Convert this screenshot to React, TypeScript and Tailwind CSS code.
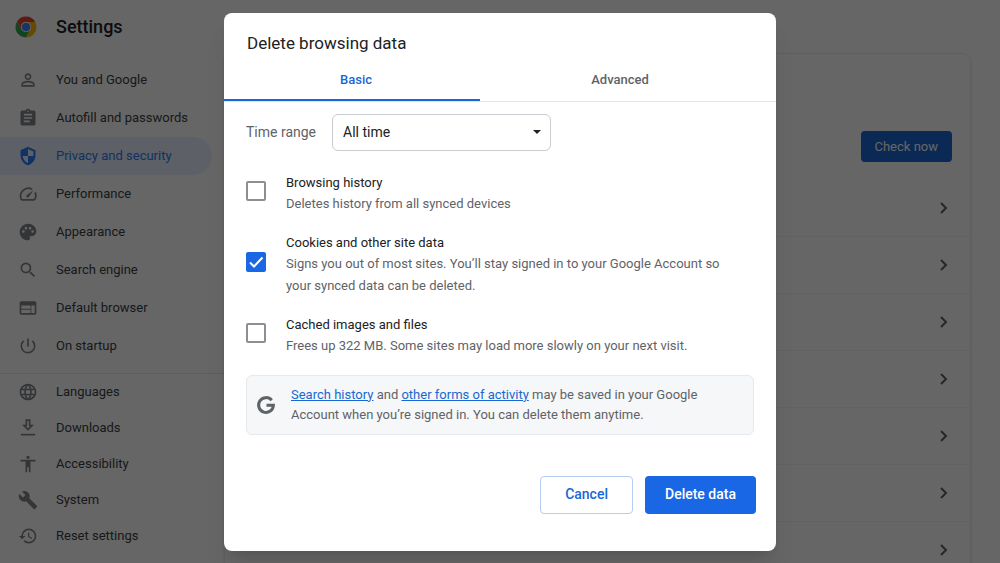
import { useState } from "react";
import type { ReactNode } from "react";
import {
  MdAccessibility,
  MdAssignment,
  MdBuild,
  MdHistory,
  MdLanguage,
  MdPalette,
  MdPersonOutline,
  MdPowerSettingsNew,
  MdSearch,
  MdWeb,
} from "react-icons/md";

interface NavItem {
  label: string;
  icon: ReactNode;
  active?: boolean;
}

function ShieldIcon() {
  return (
    <svg viewBox="0 0 24 24" className="size-5" fill="currentColor">
      <path d="M12 1 3 5v6c0 5.55 3.84 10.74 9 12 5.16-1.26 9-6.45 9-12V5zm0 2.7 6.5 2.9V12H12v8.4c-3.5-1.1-6-4.5-6.5-8.4H12z" />
    </svg>
  );
}

function SpeedIcon() {
  return (
    <svg viewBox="0 0 24 24" className="size-5" fill="none" stroke="currentColor" strokeWidth="2">
      <path d="M17 6.3A9.5 9.5 0 0 0 3.9 18.5a1 1 0 0 0 .8.5h14.6a1 1 0 0 0 .8-.5 9.5 9.5 0 0 0 .6-8.5" />
      <path d="M18.5 7.5 11 13a1.7 1.7 0 1 0 2.2 2.2z" fill="currentColor" stroke="none" />
    </svg>
  );
}

function DownloadIcon() {
  return (
    <svg viewBox="0 0 24 24" className="size-5" fill="none" stroke="currentColor" strokeWidth="2">
      <path d="M10 2.5h4v6.5h2.8L12 14 7.2 9H10z" />
      <path d="M3.5 20h17" />
    </svg>
  );
}

function ChromeLogo() {
  return (
    <svg viewBox="0 0 48 48" className="size-[22px]">
      <circle cx="24" cy="24" r="23" fill="#fff" />
      <path d="M24 13h20.1A23 23 0 0 0 4.1 12.5L14.4 29.5A11 11 0 0 1 24 13z" fill="#ea4335" />
      <path d="M33.5 29.5 23.5 47A23 23 0 0 0 44.1 13H24a11 11 0 0 1 9.5 16.5z" fill="#fbbc04" />
      <path d="M14.5 29.5 4.1 12.5A23 23 0 0 0 23.5 47l10-17.5a11 11 0 0 1-19 0z" fill="#34a853" />
      <circle cx="24" cy="24" r="11" fill="#fff" />
      <circle cx="24" cy="24" r="9.5" fill="#4285f4" />
    </svg>
  );
}

function GoogleIcon() {
  return (
    <svg viewBox="0 0 20 20" className="size-5 shrink-0" fill="none" stroke="#5f6368" strokeWidth="3">
      <path d="M15.7 5.3A7.4 7.4 0 1 0 17.4 10.2H10.5" />
    </svg>
  );
}

const mainItems: NavItem[] = [
  { label: "You and Google", icon: <MdPersonOutline size={20} /> },
  { label: "Autofill and passwords", icon: <MdAssignment size={20} /> },
  { label: "Privacy and security", icon: <ShieldIcon />, active: true },
  { label: "Performance", icon: <SpeedIcon /> },
  { label: "Appearance", icon: <MdPalette size={20} /> },
  { label: "Search engine", icon: <MdSearch size={20} /> },
  { label: "Default browser", icon: <MdWeb size={20} /> },
  { label: "On startup", icon: <MdPowerSettingsNew size={20} /> },
];

const moreItems: NavItem[] = [
  { label: "Languages", icon: <MdLanguage size={20} /> },
  { label: "Downloads", icon: <DownloadIcon /> },
  { label: "Accessibility", icon: <MdAccessibility size={20} /> },
  { label: "System", icon: <MdBuild size={20} /> },
  { label: "Reset settings", icon: <MdHistory size={20} /> },
];

const dataOptions = [
  {
    id: "history",
    title: "Browsing history",
    text: "Deletes history from all synced devices",
    checked: false,
  },
  {
    id: "cookies",
    title: "Cookies and other site data",
    text: "Signs you out of most sites. You’ll stay signed in to your Google Account so your synced data can be deleted.",
    checked: true,
  },
  {
    id: "cache",
    title: "Cached images and files",
    text: "Frees up 322 MB. Some sites may load more slowly on your next visit.",
    checked: false,
  },
];

function Chevron() {
  return (
    <svg viewBox="0 0 8 12" className="h-3 w-2" fill="none" stroke="#5f6368" strokeWidth="2">
      <path d="m1 1 5 5-5 5" />
    </svg>
  );
}

function NavLink({ item, height }: { item: NavItem; height: string }) {
  return (
    <a
      href="#"
      className={`flex items-center gap-[18px] rounded-r-full pl-[18px] ${height} ${
        item.active ? "bg-[#e8f0fe] text-[#2b7df5]" : "text-[#3c4043]"
      }`}
    >
      <span className={item.active ? "" : "text-[#80868b]"}>{item.icon}</span>
      {item.label}
    </a>
  );
}

function Sidebar() {
  return (
    <aside className="w-56 shrink-0">
      <header className="flex h-[54px] items-center gap-[19px] pl-[15px]">
        <ChromeLogo />
        <h1 className="text-lg font-medium text-[#202124]">Settings</h1>
      </header>
      <nav className="pt-[7px] text-[13px]">
        <ul className="mr-3">
          {mainItems.map((item) => (
            <li key={item.label}>
              <NavLink item={item} height="h-[38px]" />
            </li>
          ))}
        </ul>
        <ul className="mt-2 border-t border-[#e8eaed]">
          {moreItems.map((item) => (
            <li key={item.label}>
              <NavLink item={item} height="h-9" />
            </li>
          ))}
        </ul>
      </nav>
    </aside>
  );
}

function SettingsPage() {
  return (
    <div className="flex h-screen overflow-hidden bg-white">
      <Sidebar />
      <main className="flex-1 pt-[53px] pr-[29px]">
        <div className="rounded-t-lg border border-[#eceef0] shadow-sm">
          <div className="flex h-[126px] items-end justify-end px-[18px] pb-[18px]">
            <button type="button" className="h-[31px] rounded bg-[#1967d2] px-[14px] text-[13px] text-white">
              Check now
            </button>
          </div>
          {[0, 1, 2, 3, 4, 5, 6].map((row) => (
            <div key={row} className="flex h-[57px] items-center justify-end border-b border-[#f4f5f6] px-[22px]">
              <Chevron />
            </div>
          ))}
        </div>
      </main>
    </div>
  );
}

function DataCheckbox({ option }: { option: (typeof dataOptions)[number] }) {
  const [checked, setChecked] = useState(option.checked);

  return (
    <label htmlFor={option.id} className="flex items-center gap-5">
      <span className="relative mb-[6px] size-5 shrink-0">
        <input
          id={option.id}
          type="checkbox"
          checked={checked}
          onChange={(e) => setChecked(e.target.checked)}
          className="block size-5 appearance-none rounded-xs border-2 border-[#8b8e92] bg-white checked:border-[#1967e4] checked:bg-[#1967e4]"
        />
        {checked && (
          <svg viewBox="0 0 20 20" className="pointer-events-none absolute inset-0" fill="none" stroke="#fff" strokeWidth="2">
            <path d="m4 10.5 4 4 8.5-9" />
          </svg>
        )}
      </span>
      <span className="block max-w-[456px] text-[13px]">
        <span className="block leading-5 text-[#202124]">{option.title}</span>
        <span className="block leading-[22px] text-[#5f6368]">{option.text}</span>
      </span>
    </label>
  );
}

function DeleteDialog() {
  const [tab, setTab] = useState("Basic");

  return (
    <section
      role="dialog"
      aria-labelledby="dialog-title"
      className="w-full max-w-[552px] rounded-lg bg-white pb-[37px] text-[14px] shadow-xl"
    >
      <h2 id="dialog-title" className="px-[23px] pt-[18px] text-[17px] leading-6 text-[#202124]">
        Delete browsing data
      </h2>
      <div role="tablist" className="mt-1 flex border-b border-[#e3e5e8] pr-6">
        {["Basic", "Advanced"].map((name) => (
          <button
            key={name}
            type="button"
            role="tab"
            aria-selected={tab === name}
            onClick={() => setTab(name)}
            className={`relative h-[42px] flex-1 text-[13px] font-medium ${tab === name ? "text-[#1967d2]" : "text-[#5f6368]"}`}
          >
            {name}
            {tab === name && <span className="absolute right-2 bottom-0 left-0 h-[2px] bg-[#1a67dc]" />}
          </button>
        ))}
      </div>

      <div className="px-[22px] pt-3">
        <div className="flex items-center gap-4">
          <label htmlFor="range" className="text-[#5f6368]">
            Time range
          </label>
          <div className="relative">
            <select
              id="range"
              className="h-[37px] w-[219px] appearance-none rounded-md border border-[#c9ccd1] bg-white px-[10px] text-[#202124]"
            >
              <option>All time</option>
              <option>Last hour</option>
              <option>Last 24 hours</option>
            </select>
            <svg viewBox="0 0 8 4" className="pointer-events-none absolute top-4 right-[10px] h-1 w-2">
              <path d="M0 0h8L4 4z" fill="#202124" />
            </svg>
          </div>
        </div>

        <div className="flex flex-col gap-[18px] pt-[22px]">
          {dataOptions.map((option) => (
            <DataCheckbox key={option.id} option={option} />
          ))}
        </div>

        <div className="mt-[18px] flex items-center gap-[15px] rounded-md border border-[#e6e9ed] bg-[#f5f7f9] px-[9px] py-[9px] text-[13px] leading-5 text-[#5f6368]">
          <GoogleIcon />
          <p>
            <a href="#" className="text-[#1967d2] underline">Search history</a> and{" "}
            <a href="#" className="text-[#1967d2] underline">other forms of activity</a> may be saved in your Google
            <br />
            Account when you’re signed in. You can delete them anytime.
          </p>
        </div>
      </div>

      <div className="mt-[41px] flex justify-end gap-3 px-5">
        <button type="button" className="h-[38px] rounded border border-[#b5cdf0] px-6 font-medium text-[#1967d2]">
          Cancel
        </button>
        <button type="button" className="h-[38px] rounded bg-[#1967e4] px-5 font-medium text-white">
          Delete data
        </button>
      </div>
    </section>
  );
}

export default function App() {
  return (
    <div className="relative font-[Roboto,sans-serif]">
      <SettingsPage />
      <div className="absolute inset-0 flex items-center justify-center bg-black/60">
        <DeleteDialog />
      </div>
    </div>
  );
}
